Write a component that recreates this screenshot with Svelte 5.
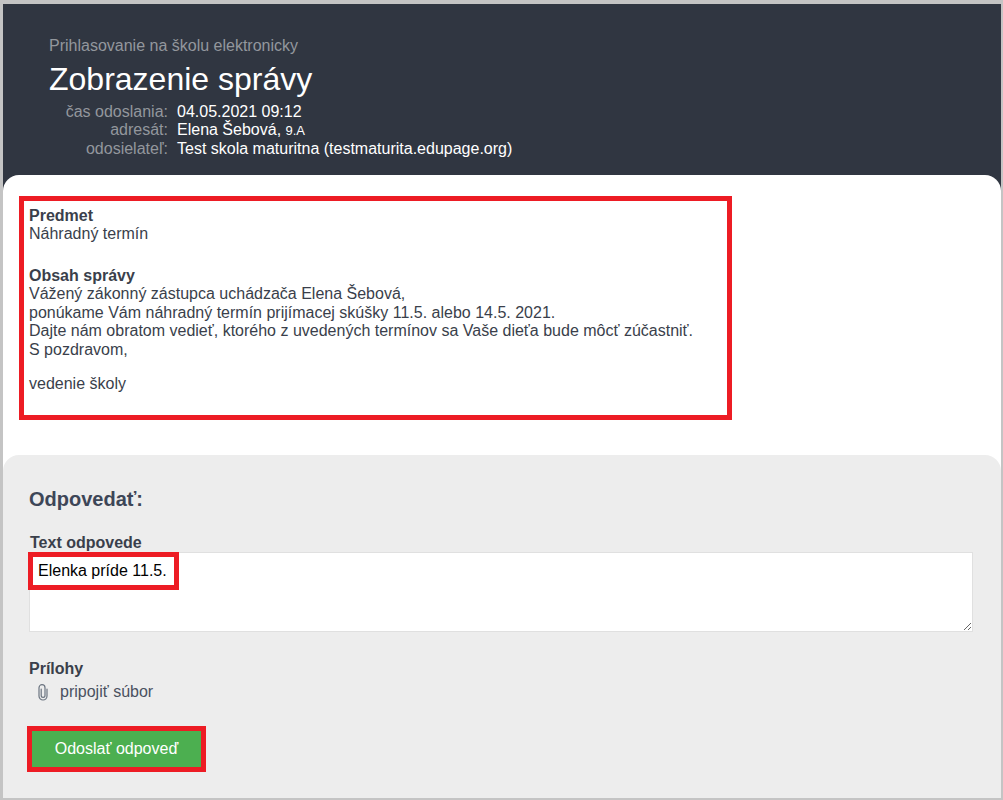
<script>
  let reply = $state('Elenka príde 11.5.');
</script>

<div class="frame">
  <header class="head">
    <div class="kicker">Prihlasovanie na školu elektronicky</div>
    <h1>Zobrazenie správy</h1>
    <dl class="meta">
      <dt>čas odoslania:</dt><dd>04.05.2021 09:12</dd>
      <dt>adresát:</dt><dd>Elena Šebová, <small>9.A</small></dd>
      <dt>odosielateľ:</dt><dd>Test skola maturitna (testmaturita.edupage.org)</dd>
    </dl>
  </header>

  <main class="panel">
    <section class="message">
      <b>Predmet</b>
      <p>Náhradný termín</p>
      <b class="gap-a">Obsah správy</b>
      <p>Vážený zákonný zástupca uchádzača Elena Šebová,</p>
      <p>ponúkame Vám náhradný termín prijímacej skúšky 11.5. alebo 14.5. 2021.</p>
      <p>Dajte nám obratom vedieť, ktorého z uvedených termínov sa Vaše dieťa bude môcť zúčastniť.</p>
      <p>S pozdravom,</p>
      <p class="gap-b">vedenie školy</p>
    </section>

    <form class="reply" onsubmit={(e) => e.preventDefault()}>
      <h2>Odpovedať:</h2>
      <label class="label" for="reply">Text odpovede</label>
      <div class="field">
        <textarea id="reply" bind:value={reply}></textarea>
        <span class="mark"></span>
      </div>
      <div class="label attach-title">Prílohy</div>
      <div class="attach">
        <svg width="12" height="17" viewBox="0 0 12 17" fill="none" stroke="#6b7480" stroke-width="1.2" stroke-linecap="round">
          <path d="M10 5v7a4 4 0 0 1-8 0V3.7a3 3 0 0 1 6 0V11.5a1.9 1.9 0 0 1-3.8 0V5"/>
        </svg>
        <span>pripojiť súbor</span>
      </div>
      <button type="submit">Odoslať odpoveď</button>
    </form>
  </main>
</div>

<style>
  :global(body) { margin: 0; background: #c4c4c4; }
  .frame {
    box-sizing: border-box;
    height: 800px;
    border-style: solid;
    border-color: #c4c4c4;
    border-width: 4px 2px 2px 3px;
    background: #303641;
    display: flex;
    flex-direction: column;
    font: 16px/18.4px "Liberation Sans", Arial, sans-serif;
    color: #3a3f4b;
    overflow: hidden;
  }
  .head { height: 171px; box-sizing: border-box; padding: 33px 46px 0; flex: none; }
  .kicker { font-size: 16px; line-height: 17px; color: #93979d; }
  h1 { margin: 7px 0 6px; font-size: 32px; line-height: 36px; font-weight: 400; color: #fff; }
  .meta {
    margin: 0;
    display: grid;
    grid-template-columns: 119px auto;
    column-gap: 9px;
    justify-content: start;
    line-height: 18px;
  }
  dt { text-align: right; color: #93979d; }
  dd { margin: 0; color: #fff; }
  small { font-size: 13px; }

  .panel {
    flex: 1;
    background: #fff;
    border-radius: 16px 16px 0 0;
    display: flex;
    flex-direction: column;
    padding-top: 21px;
    min-height: 0;
  }
  .message {
    box-sizing: border-box;
    width: 713px;
    height: 224px;
    margin-left: 16px;
    border: 5px solid #ed1c24;
    padding: 5.6px 5px 5px;
  }
  .message b { display: block; }
  .message p { margin: 0; }
  .message .gap-a { margin-top: 23.6px; }
  .message .gap-b { margin-top: 16px; }

  .reply {
    flex: 1;
    margin-top: 35px;
    background: #ededed;
    border-radius: 16px 16px 0 0;
    padding: 32px 26px 0;
  }
  h2 { margin: 0 0 22px; font-size: 20px; line-height: 24px; font-weight: 700; color: #3d4657; }
  .label { display: block; font-weight: 700; line-height: 19px; margin-left: 1px; }
  .field { position: relative; height: 80px; width: 944px; }
  textarea {
    box-sizing: border-box;
    display: block;
    width: 100%;
    height: 80px;
    margin: 0;
    border: 1px solid #e0e0e0;
    background: #fff;
    padding: 8px;
    font: 16px/20px "Liberation Sans", Arial, sans-serif;
    color: #000;
    outline: none;
  }
  .mark {
    position: absolute;
    left: -1px;
    top: 0;
    width: 151px;
    height: 38px;
    box-sizing: border-box;
    border: 5px solid #ed1c24;
    pointer-events: none;
  }
  .attach-title { margin: 27px 0 0; }
  .attach { display: flex; align-items: center; gap: 11px; margin: 5px 0 0 8px; color: #4a5160; }
  button {
    display: block;
    box-sizing: border-box;
    margin: 25px 0 0 -2px;
    width: 179px;
    height: 46px;
    background: #4caf50;
    border: 5px solid #ed1c24;
    color: #fff;
    font: 16px "Liberation Sans", Arial, sans-serif;
    padding: 0;
  }
</style>
